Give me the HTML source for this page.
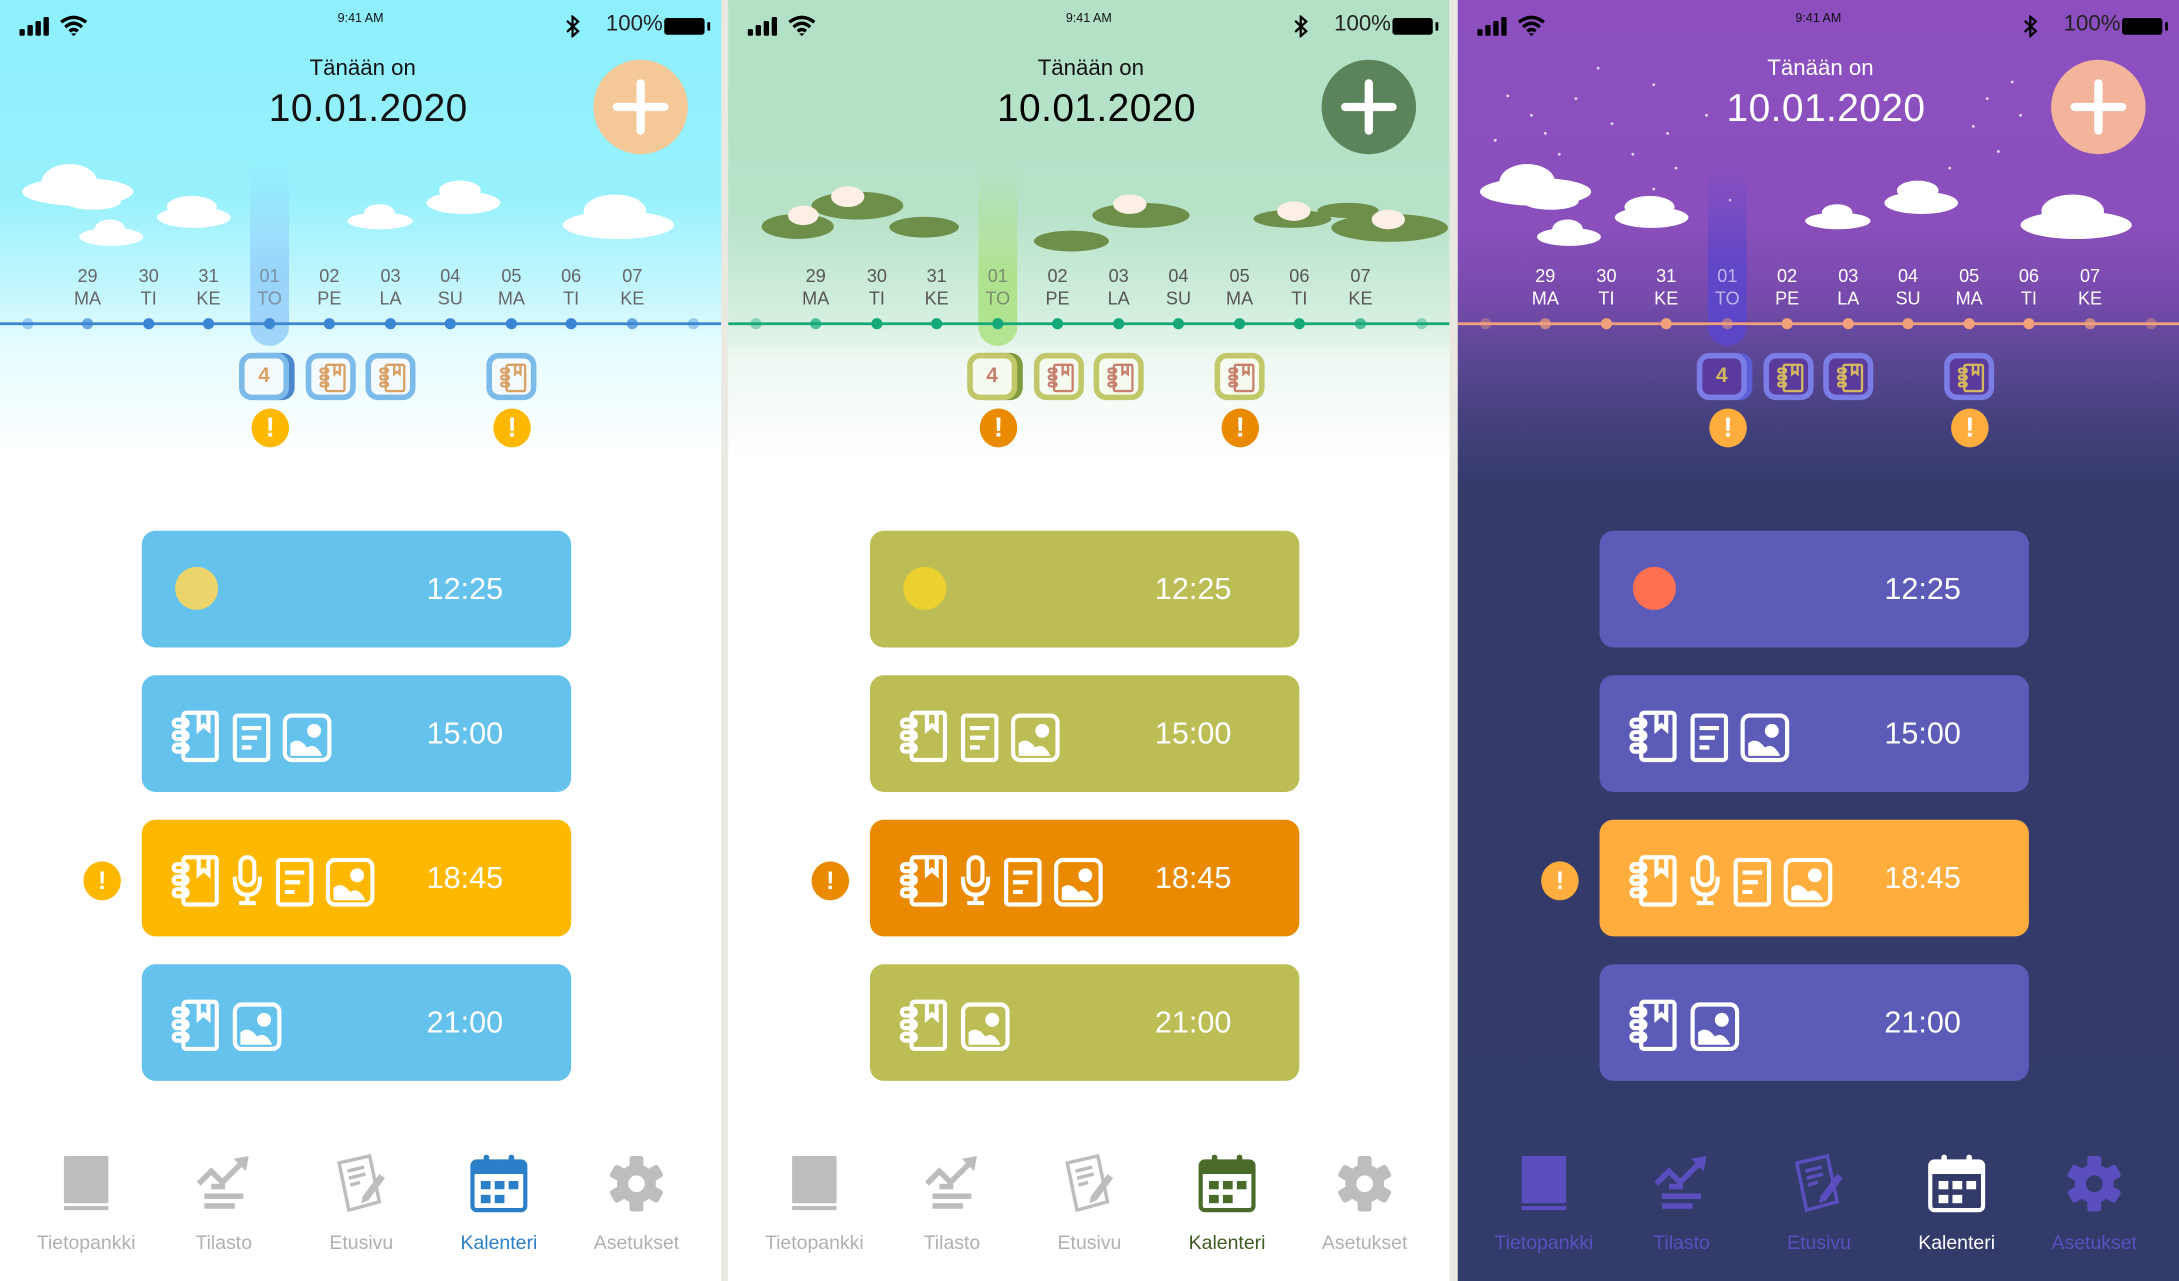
<!DOCTYPE html>
<html><head><meta charset="utf-8"><style>
*{box-sizing:border-box}
html,body{margin:0;padding:0;width:2179px;height:1281px;overflow:hidden;background:#e9e9e1;font-family:"Liberation Sans",sans-serif}
#root{position:absolute;left:0;top:0;width:1568px;height:922px;transform:scale(1.38967,1.38937);transform-origin:0 0}
.panel{position:absolute;top:0;width:519px;height:922px;overflow:hidden;--gh:#fff}
.a{position:absolute}
.p1{left:0;background:linear-gradient(#8ef0fd 0,#97f1fd 140px,#c8f7fe 215px,#e6fcff 250px,#fff 330px);
--card:#64c2ec;--cardO:#ffb800;--sun:#ecd46a;--warn:#ffb800;--line:#3a85d4;--badge:#7cbbe9;--bicon:#d9a066;--binner:#f4fbff;--txt:#666;--head:#111;--pill:rgba(140,200,250,.75);--plus:#f5c897;--navI:#bdbdbd;--navA:#2a7fc8}
.p2{left:524px;background:linear-gradient(#b2e1c5 0,#b6e2c8 150px,#d2eedd 225px,#eef8f2 260px,#fff 330px);
--card:#bdbd55;--cardO:#e98a00;--sun:#ecd030;--warn:#e98a00;--line:#15a878;--badge:#c0c86a;--bicon:#c8806e;--binner:#f6fbf0;--txt:#555;--head:#111;--pill:rgba(170,225,130,.85);--plus:#5b845a;--navI:#bdbdbd;--navA:#4a6a2a}
.p3{left:1049px;background:linear-gradient(#8d4fc0 0,#8a4fbc 160px,#774aac 215px,#5f4897 250px,#46417f 300px,#343b6b 350px,#333b6a 100%);
--card:#5c5bb8;--cardO:#ffad3d;--sun:#ff7050;--warn:#ffad3d;--line:#f0a07a;--badge:#7b7de6;--bicon:#d4b860;--binner:#5a3a9c;--txt:#fff;--head:#fff;--pill:rgba(90,70,205,.85);--plus:#f2b49a;--navI:#5b4fbf;--navA:#fff;--gh:#333b6a}
.time{left:0;width:519px;top:8px;text-align:center;font-size:9px;color:#111}
.pct{left:436px;top:9px;font-size:16px;color:#222}
.bat{left:478px;top:13px;width:29px;height:12px;background:#000;border-radius:2px}
.nub{left:509px;top:16px;width:2px;height:6px;background:#000}
.t1{left:0;width:522px;top:41px;text-align:center;font-size:16px;color:var(--head)}
.t2{left:0;width:530px;top:62px;text-align:center;font-size:28px;color:var(--head);letter-spacing:0.3px}
.plus{left:427px;top:43px;width:68px;height:68px;border-radius:50%;background:var(--plus)}
.plus:before{content:"";position:absolute;left:14px;top:31px;width:40px;height:6px;border-radius:3px;background:#fff}
.plus:after{content:"";position:absolute;left:31px;top:14px;width:6px;height:40px;border-radius:3px;background:#fff}
.cloud{position:absolute;background:#fff;border-radius:50%}
.pill{left:180px;top:118px;width:28px;height:131px;border-radius:0 0 14px 14px;background:linear-gradient(rgba(255,255,255,0),var(--pill) 60%)}
.dl{position:absolute;width:40px;text-align:center;font-size:13px;color:var(--txt);line-height:16px}
.line{left:0;top:232px;width:519px;height:2px;background:var(--line)}
.dot{position:absolute;top:229px;width:8px;height:8px;border-radius:50%;background:var(--line)}
.badge{position:absolute;top:254px;width:36px;height:34px;border-radius:9px;border:4px solid var(--badge);background:var(--binner);color:var(--bicon)}
.badge svg{position:absolute;left:5px;top:3px;width:20px;height:22px}
.warn{position:absolute;width:27px;height:28px;border-radius:50%;background:var(--warn);color:#fff;text-align:center;font-weight:bold;font-size:20px;line-height:28px}
.card{position:absolute;left:102px;width:309px;height:84px;border-radius:10px;background:var(--card);color:#fff}
.card .tm{position:absolute;left:205px;top:0;line-height:84px;font-size:22px;color:#fff}
.card svg{position:absolute;color:#fff}
.nav{position:absolute;top:830px;width:44px;height:44px;color:var(--navI)}
.nl{position:absolute;top:886px;width:110px;text-align:center;font-size:14px;color:var(--navI)}
.act{color:var(--navA)}
.p1 .nl,.p2 .nl{color:#b0b0b0}
.p1 .nl.act{color:#2a7fc8}.p2 .nl.act{color:#3d5a22}
.star{position:absolute;width:2px;height:2px;border-radius:50%;background:#e8dcf5}
</style></head><body>
<svg width="0" height="0" style="position:absolute">
<defs>
<symbol id="nb" viewBox="0 0 36 38"><g fill="none" stroke="currentColor" stroke-width="3"><rect x="10" y="2" width="24" height="34" rx="2"/><path d="M21 2V14L24.5 11L28 14V2"/><rect x="3" y="7" width="10" height="5" rx="2.5"/><rect x="3" y="16" width="10" height="5" rx="2.5"/><rect x="3" y="25" width="10" height="5" rx="2.5"/></g></symbol>
<symbol id="mic" viewBox="0 0 24 38"><g fill="none" stroke="currentColor" stroke-width="3"><rect x="7" y="2" width="10" height="20" rx="5"/><path d="M3 16V18Q3 29 12 29Q21 29 21 18V16M12 29V35M6 35H18"/></g></symbol>
<symbol id="doc" viewBox="0 0 28 36"><g fill="none" stroke="currentColor" stroke-width="3"><rect x="2" y="2" width="24" height="32" rx="2"/><path d="M7 11H21M7 18H18M7 25H14"/></g></symbol>
<symbol id="img" viewBox="0 0 36 36"><rect x="2" y="2" width="32" height="32" rx="5" fill="none" stroke="currentColor" stroke-width="3"/><circle cx="23" cy="13" r="5" fill="currentColor"/><path d="M6 31V22Q12 17 18 25Q24 21 29 31Z" fill="currentColor"/></symbol>
<symbol id="book" viewBox="0 0 44 44"><rect x="6" y="2" width="32" height="34" rx="1" fill="currentColor"/><rect x="6" y="38" width="32" height="3" fill="currentColor"/></symbol>
<symbol id="chart" viewBox="0 0 44 44"><path d="M4 22L13 13L21 21L35 7" fill="none" stroke="currentColor" stroke-width="4"/><path d="M29 4L40 2L38 13Z" fill="currentColor"/><rect x="13" y="22" width="10" height="4" fill="currentColor"/><rect x="8" y="29" width="28" height="4" fill="currentColor"/><rect x="8" y="36" width="22" height="4" fill="currentColor"/></symbol>
<symbol id="edit" viewBox="0 0 44 44"><path d="M6 7L28 2L35 35L13 41Z" fill="none" stroke="currentColor" stroke-width="2.5"/><path d="M12 13L24 10M13 18L25 15M14 23L21 21" stroke="currentColor" stroke-width="2.5"/><path d="M35 15L39 18L27 34L22 36L23 31Z" fill="currentColor"/></symbol>
<symbol id="cal" viewBox="0 0 44 44"><rect x="3" y="6" width="38" height="35" rx="3" fill="none" stroke="currentColor" stroke-width="3"/><rect x="3" y="6" width="38" height="9" fill="currentColor"/><rect x="11" y="1" width="4" height="10" rx="2" fill="currentColor"/><rect x="29" y="1" width="4" height="10" rx="2" fill="currentColor"/><g fill="currentColor"><rect x="9" y="20" width="7" height="6"/><rect x="19" y="20" width="7" height="6"/><rect x="29" y="20" width="7" height="6"/><rect x="9" y="30" width="7" height="6"/><rect x="19" y="30" width="7" height="6"/></g></symbol>
<symbol id="gear" viewBox="0 0 44 44"><g fill="currentColor"><rect x="17" y="2" width="10" height="40" rx="2"/><rect x="17" y="2" width="10" height="40" rx="2" transform="rotate(60 22 22)"/><rect x="17" y="2" width="10" height="40" rx="2" transform="rotate(120 22 22)"/><circle cx="22" cy="22" r="14"/></g><circle cx="22" cy="22" r="6" style="fill:var(--gh,#fff)"/></symbol>
<symbol id="sig" viewBox="0 0 26 14"><g fill="#000"><rect x="0" y="9" width="4" height="5" rx="1"/><rect x="6" y="6" width="4" height="8" rx="1"/><rect x="12" y="3" width="4" height="11" rx="1"/><rect x="18" y="0" width="4" height="14" rx="1"/></g></symbol>
<symbol id="wifi" viewBox="0 0 20 15"><path d="M1 5Q10 -2 19 5M4 8.5Q10 3 16 8.5M7 11.5Q10 9 13 11.5" fill="none" stroke="#000" stroke-width="2.4"/><path d="M8 13L10 15L12 13Z" fill="#000"/></symbol>
<symbol id="bt" viewBox="0 0 10 16"><path d="M1 4L9 11.5L5 15V1L9 4.5L1 12" fill="none" stroke="#000" stroke-width="1.6"/></symbol>
</defs></svg>
<div id="root">

<!-- PANEL 1 -->
<div class="panel p1">
<svg class="a" style="left:14px;top:12px" width="25" height="14"><use href="#sig"/></svg>
<svg class="a" style="left:43px;top:11px" width="20" height="15"><use href="#wifi"/></svg>
<div class="a time">9:41 AM</div>
<svg class="a" style="left:407px;top:11px" width="10" height="16"><use href="#bt"/></svg>
<div class="a pct">100%</div><div class="a bat"></div><div class="a nub"></div>
<div class="a t1">Tänään on</div>
<div class="a t2">10.01.2020</div>
<div class="a plus"></div>
<div class="cloud" style="left:16px;top:128px;width:80px;height:20px"></div><div class="cloud" style="left:30px;top:118px;width:40px;height:26px"></div><div class="cloud" style="left:47px;top:139px;width:40px;height:12px"></div>
<div class="cloud" style="left:57px;top:164px;width:46px;height:13px"></div><div class="cloud" style="left:68px;top:158px;width:22px;height:14px"></div>
<div class="cloud" style="left:113px;top:149px;width:53px;height:15px"></div><div class="cloud" style="left:120px;top:141px;width:36px;height:16px"></div>
<div class="cloud" style="left:250px;top:153px;width:47px;height:12px"></div><div class="cloud" style="left:262px;top:147px;width:22px;height:12px"></div>
<div class="cloud" style="left:307px;top:138px;width:53px;height:16px"></div><div class="cloud" style="left:316px;top:130px;width:30px;height:14px"></div>
<div class="cloud" style="left:405px;top:152px;width:80px;height:20px"></div><div class="cloud" style="left:420px;top:140px;width:45px;height:24px"></div>
<div class="a pill"></div>
<div class="dl" style="left:43px;top:191px">29<br>MA</div><div class="dl" style="left:87px;top:191px">30<br>TI</div><div class="dl" style="left:130px;top:191px">31<br>KE</div><div class="dl" style="left:174px;top:191px;opacity:.6">01<br>TO</div><div class="dl" style="left:217px;top:191px">02<br>PE</div><div class="dl" style="left:261px;top:191px">03<br>LA</div><div class="dl" style="left:304px;top:191px">04<br>SU</div><div class="dl" style="left:348px;top:191px">05<br>MA</div><div class="dl" style="left:391px;top:191px">06<br>TI</div><div class="dl" style="left:435px;top:191px">07<br>KE</div>
<div class="a line"></div>
<div class="dot" style="left:16px;opacity:.4"></div><div class="dot" style="left:59px;opacity:.7"></div><div class="dot" style="left:103px"></div><div class="dot" style="left:146px"></div><div class="dot" style="left:190px"></div><div class="dot" style="left:233px"></div><div class="dot" style="left:277px"></div><div class="dot" style="left:320px"></div><div class="dot" style="left:364px"></div><div class="dot" style="left:407px"></div><div class="dot" style="left:451px;opacity:.7"></div><div class="dot" style="left:495px;opacity:.4"></div>
<div class="badge" style="left:172px;box-shadow:4px 0 0 #4a86cc;text-align:center;font-weight:bold;font-size:15px;line-height:26px">4</div>
<div class="badge" style="left:220px"><svg><use href="#nb"/></svg></div>
<div class="badge" style="left:263px"><svg><use href="#nb"/></svg></div>
<div class="badge" style="left:350px"><svg><use href="#nb"/></svg></div>
<div class="warn" style="left:181px;top:294px">!</div><div class="warn" style="left:355px;top:294px">!</div>
<div class="card" style="top:382px"><div class="a" style="left:24px;top:26px;width:31px;height:31px;border-radius:50%;background:var(--sun)"></div><div class="tm">12:25</div></div>
<div class="card" style="top:486px"><svg style="left:20px;top:25px" width="36" height="38"><use href="#nb"/></svg><svg style="left:65px;top:27px" width="28" height="36"><use href="#doc"/></svg><svg style="left:101px;top:27px" width="36" height="36"><use href="#img"/></svg><div class="tm">15:00</div></div>
<div class="warn" style="left:60px;top:620px;font-size:18px">!</div>
<div class="card" style="top:590px;background:var(--cardO)"><svg style="left:20px;top:25px" width="36" height="38"><use href="#nb"/></svg><svg style="left:64px;top:25px" width="24" height="38"><use href="#mic"/></svg><svg style="left:96px;top:27px" width="28" height="36"><use href="#doc"/></svg><svg style="left:132px;top:27px" width="36" height="36"><use href="#img"/></svg><div class="tm">18:45</div></div>
<div class="card" style="top:694px"><svg style="left:20px;top:25px" width="36" height="38"><use href="#nb"/></svg><svg style="left:65px;top:27px" width="36" height="36"><use href="#img"/></svg><div class="tm">21:00</div></div>
<svg class="nav" style="left:40px"><use href="#book"/></svg><svg class="nav" style="left:139px"><use href="#chart"/></svg><svg class="nav" style="left:238px"><use href="#edit"/></svg><svg class="nav act" style="left:337px"><use href="#cal"/></svg><svg class="nav" style="left:436px"><use href="#gear"/></svg>
<div class="nl" style="left:7px">Tietopankki</div><div class="nl" style="left:106px">Tilasto</div><div class="nl" style="left:205px">Etusivu</div><div class="nl act" style="left:304px">Kalenteri</div><div class="nl" style="left:403px">Asetukset</div>
</div>

<!-- PANEL 2 -->
<div class="panel p2">
<svg class="a" style="left:14px;top:12px" width="25" height="14"><use href="#sig"/></svg>
<svg class="a" style="left:43px;top:11px" width="20" height="15"><use href="#wifi"/></svg>
<div class="a time">9:41 AM</div>
<svg class="a" style="left:407px;top:11px" width="10" height="16"><use href="#bt"/></svg>
<div class="a pct">100%</div><div class="a bat"></div><div class="a nub"></div>
<div class="a t1">Tänään on</div>
<div class="a t2" style="color:#000">10.01.2020</div>
<div class="a plus"></div>
<div class="cloud" style="left:24px;top:154px;width:52px;height:18px;background:#6e8f4a"></div>
<div class="cloud" style="left:60px;top:138px;width:66px;height:20px;background:#6e8f4a"></div>
<div class="cloud" style="left:116px;top:156px;width:50px;height:15px;background:#6e8f4a"></div>
<div class="cloud" style="left:220px;top:166px;width:54px;height:15px;background:#6e8f4a"></div>
<div class="cloud" style="left:262px;top:146px;width:70px;height:18px;background:#6e8f4a"></div>
<div class="cloud" style="left:378px;top:151px;width:56px;height:13px;background:#6e8f4a"></div>
<div class="cloud" style="left:424px;top:146px;width:44px;height:11px;background:#6e8f4a"></div>
<div class="cloud" style="left:434px;top:154px;width:84px;height:20px;background:#6e8f4a"></div>
<div class="cloud" style="left:43px;top:148px;width:22px;height:14px;background:#fdeee6"></div>
<div class="cloud" style="left:74px;top:134px;width:24px;height:15px;background:#fdeee6"></div>
<div class="cloud" style="left:277px;top:140px;width:24px;height:14px;background:#fdeee6"></div>
<div class="cloud" style="left:395px;top:145px;width:24px;height:14px;background:#fdeee6"></div>
<div class="cloud" style="left:463px;top:151px;width:24px;height:14px;background:#fdeee6"></div>
<div class="a pill"></div>
<div class="dl" style="left:43px;top:191px">29<br>MA</div><div class="dl" style="left:87px;top:191px">30<br>TI</div><div class="dl" style="left:130px;top:191px">31<br>KE</div><div class="dl" style="left:174px;top:191px;opacity:.6">01<br>TO</div><div class="dl" style="left:217px;top:191px">02<br>PE</div><div class="dl" style="left:261px;top:191px">03<br>LA</div><div class="dl" style="left:304px;top:191px">04<br>SU</div><div class="dl" style="left:348px;top:191px">05<br>MA</div><div class="dl" style="left:391px;top:191px">06<br>TI</div><div class="dl" style="left:435px;top:191px">07<br>KE</div>
<div class="a line"></div>
<div class="dot" style="left:16px;opacity:.4"></div><div class="dot" style="left:59px;opacity:.7"></div><div class="dot" style="left:103px"></div><div class="dot" style="left:146px"></div><div class="dot" style="left:190px"></div><div class="dot" style="left:233px"></div><div class="dot" style="left:277px"></div><div class="dot" style="left:320px"></div><div class="dot" style="left:364px"></div><div class="dot" style="left:407px"></div><div class="dot" style="left:451px;opacity:.7"></div><div class="dot" style="left:495px;opacity:.4"></div>
<div class="badge" style="left:172px;box-shadow:4px 0 0 #7f9a3c;text-align:center;font-weight:bold;font-size:15px;line-height:26px">4</div>
<div class="badge" style="left:220px"><svg><use href="#nb"/></svg></div>
<div class="badge" style="left:263px"><svg><use href="#nb"/></svg></div>
<div class="badge" style="left:350px"><svg><use href="#nb"/></svg></div>
<div class="warn" style="left:181px;top:294px">!</div><div class="warn" style="left:355px;top:294px">!</div>
<div class="card" style="top:382px"><div class="a" style="left:24px;top:26px;width:31px;height:31px;border-radius:50%;background:var(--sun)"></div><div class="tm">12:25</div></div>
<div class="card" style="top:486px"><svg style="left:20px;top:25px" width="36" height="38"><use href="#nb"/></svg><svg style="left:65px;top:27px" width="28" height="36"><use href="#doc"/></svg><svg style="left:101px;top:27px" width="36" height="36"><use href="#img"/></svg><div class="tm">15:00</div></div>
<div class="warn" style="left:60px;top:620px;font-size:18px">!</div>
<div class="card" style="top:590px;background:var(--cardO)"><svg style="left:20px;top:25px" width="36" height="38"><use href="#nb"/></svg><svg style="left:64px;top:25px" width="24" height="38"><use href="#mic"/></svg><svg style="left:96px;top:27px" width="28" height="36"><use href="#doc"/></svg><svg style="left:132px;top:27px" width="36" height="36"><use href="#img"/></svg><div class="tm">18:45</div></div>
<div class="card" style="top:694px"><svg style="left:20px;top:25px" width="36" height="38"><use href="#nb"/></svg><svg style="left:65px;top:27px" width="36" height="36"><use href="#img"/></svg><div class="tm">21:00</div></div>
<svg class="nav" style="left:40px"><use href="#book"/></svg><svg class="nav" style="left:139px"><use href="#chart"/></svg><svg class="nav" style="left:238px"><use href="#edit"/></svg><svg class="nav act" style="left:337px"><use href="#cal"/></svg><svg class="nav" style="left:436px"><use href="#gear"/></svg>
<div class="nl" style="left:7px">Tietopankki</div><div class="nl" style="left:106px">Tilasto</div><div class="nl" style="left:205px">Etusivu</div><div class="nl act" style="left:304px">Kalenteri</div><div class="nl" style="left:403px">Asetukset</div>
</div>

<!-- PANEL 3 -->
<div class="panel p3">
<svg class="a" style="left:14px;top:12px" width="25" height="14"><use href="#sig"/></svg>
<svg class="a" style="left:43px;top:11px" width="20" height="15"><use href="#wifi"/></svg>
<div class="a time">9:41 AM</div>
<svg class="a" style="left:407px;top:11px" width="10" height="16"><use href="#bt"/></svg>
<div class="a pct">100%</div><div class="a bat"></div><div class="a nub"></div>
<div class="a t1">Tänään on</div>
<div class="a t2">10.01.2020</div>
<div class="a plus"></div>
<div class="star" style="left:35px;top:68px"></div><div class="star" style="left:52px;top:82px"></div><div class="star" style="left:62px;top:95px"></div><div class="star" style="left:84px;top:70px"></div><div class="star" style="left:100px;top:48px"></div><div class="star" style="left:110px;top:88px"></div><div class="star" style="left:125px;top:110px"></div><div class="star" style="left:140px;top:60px"></div><div class="star" style="left:150px;top:95px"></div><div class="star" style="left:156px;top:120px"></div><div class="star" style="left:178px;top:82px"></div><div class="star" style="left:195px;top:143px"></div><div class="star" style="left:26px;top:100px"></div><div class="star" style="left:72px;top:110px"></div><div class="star" style="left:140px;top:135px"></div><div class="star" style="left:370px;top:90px"></div><div class="star" style="left:380px;top:70px"></div><div class="star" style="left:388px;top:108px"></div><div class="star" style="left:398px;top:58px"></div><div class="star" style="left:404px;top:82px"></div><div class="star" style="left:353px;top:120px"></div><div class="star" style="left:40px;top:135px"></div>
<div class="cloud" style="left:16px;top:128px;width:80px;height:20px"></div><div class="cloud" style="left:30px;top:118px;width:40px;height:26px"></div><div class="cloud" style="left:47px;top:139px;width:40px;height:12px"></div>
<div class="cloud" style="left:57px;top:164px;width:46px;height:13px"></div><div class="cloud" style="left:68px;top:158px;width:22px;height:14px"></div>
<div class="cloud" style="left:113px;top:149px;width:53px;height:15px"></div><div class="cloud" style="left:120px;top:141px;width:36px;height:16px"></div>
<div class="cloud" style="left:250px;top:153px;width:47px;height:12px"></div><div class="cloud" style="left:262px;top:147px;width:22px;height:12px"></div>
<div class="cloud" style="left:307px;top:138px;width:53px;height:16px"></div><div class="cloud" style="left:316px;top:130px;width:30px;height:14px"></div>
<div class="cloud" style="left:405px;top:152px;width:80px;height:20px"></div><div class="cloud" style="left:420px;top:140px;width:45px;height:24px"></div>
<div class="a pill"></div>
<div class="dl" style="left:43px;top:191px">29<br>MA</div><div class="dl" style="left:87px;top:191px">30<br>TI</div><div class="dl" style="left:130px;top:191px">31<br>KE</div><div class="dl" style="left:174px;top:191px;opacity:.6">01<br>TO</div><div class="dl" style="left:217px;top:191px">02<br>PE</div><div class="dl" style="left:261px;top:191px">03<br>LA</div><div class="dl" style="left:304px;top:191px">04<br>SU</div><div class="dl" style="left:348px;top:191px">05<br>MA</div><div class="dl" style="left:391px;top:191px">06<br>TI</div><div class="dl" style="left:435px;top:191px">07<br>KE</div>
<div class="a line"></div>
<div class="dot" style="left:16px;opacity:.4"></div><div class="dot" style="left:59px;opacity:.7"></div><div class="dot" style="left:103px"></div><div class="dot" style="left:146px"></div><div class="dot" style="left:190px;opacity:.5"></div><div class="dot" style="left:233px"></div><div class="dot" style="left:277px"></div><div class="dot" style="left:320px"></div><div class="dot" style="left:364px"></div><div class="dot" style="left:407px"></div><div class="dot" style="left:451px;opacity:.7"></div><div class="dot" style="left:495px;opacity:.4"></div>
<div class="badge" style="left:172px;box-shadow:4px 0 0 #5b5ed6;text-align:center;font-weight:bold;font-size:15px;line-height:26px">4</div>
<div class="badge" style="left:220px"><svg><use href="#nb"/></svg></div>
<div class="badge" style="left:263px"><svg><use href="#nb"/></svg></div>
<div class="badge" style="left:350px"><svg><use href="#nb"/></svg></div>
<div class="warn" style="left:181px;top:294px">!</div><div class="warn" style="left:355px;top:294px">!</div>
<div class="card" style="top:382px"><div class="a" style="left:24px;top:26px;width:31px;height:31px;border-radius:50%;background:var(--sun)"></div><div class="tm">12:25</div></div>
<div class="card" style="top:486px"><svg style="left:20px;top:25px" width="36" height="38"><use href="#nb"/></svg><svg style="left:65px;top:27px" width="28" height="36"><use href="#doc"/></svg><svg style="left:101px;top:27px" width="36" height="36"><use href="#img"/></svg><div class="tm">15:00</div></div>
<div class="warn" style="left:60px;top:620px;font-size:18px">!</div>
<div class="card" style="top:590px;background:var(--cardO)"><svg style="left:20px;top:25px" width="36" height="38"><use href="#nb"/></svg><svg style="left:64px;top:25px" width="24" height="38"><use href="#mic"/></svg><svg style="left:96px;top:27px" width="28" height="36"><use href="#doc"/></svg><svg style="left:132px;top:27px" width="36" height="36"><use href="#img"/></svg><div class="tm">18:45</div></div>
<div class="card" style="top:694px"><svg style="left:20px;top:25px" width="36" height="38"><use href="#nb"/></svg><svg style="left:65px;top:27px" width="36" height="36"><use href="#img"/></svg><div class="tm">21:00</div></div>
<svg class="nav" style="left:40px"><use href="#book"/></svg><svg class="nav" style="left:139px"><use href="#chart"/></svg><svg class="nav" style="left:238px"><use href="#edit"/></svg><svg class="nav act" style="left:337px"><use href="#cal"/></svg><svg class="nav" style="left:436px"><use href="#gear"/></svg>
<div class="nl" style="left:7px">Tietopankki</div><div class="nl" style="left:106px">Tilasto</div><div class="nl" style="left:205px">Etusivu</div><div class="nl act" style="left:304px">Kalenteri</div><div class="nl" style="left:403px">Asetukset</div>
</div>

</div>
</body></html>
